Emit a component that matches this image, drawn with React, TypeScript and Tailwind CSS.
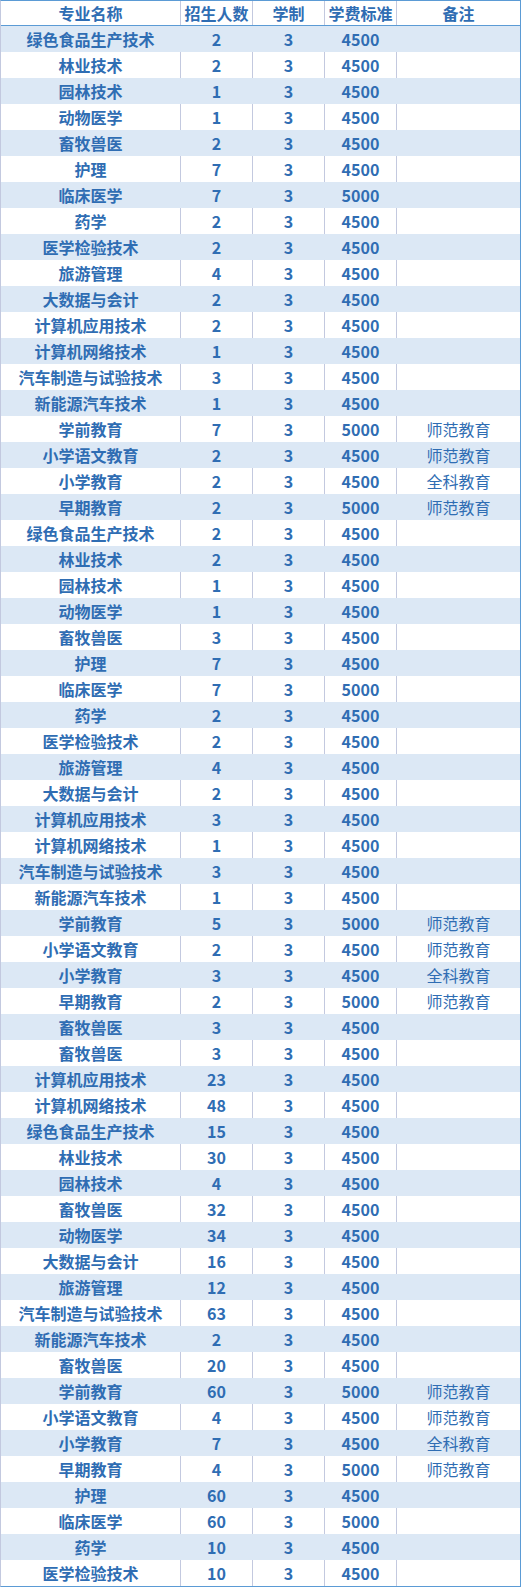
const rows: [string, string, string, string, string][] = [
  ["绿色食品生产技术", "2", "3", "4500", ""],
  ["林业技术", "2", "3", "4500", ""],
  ["园林技术", "1", "3", "4500", ""],
  ["动物医学", "1", "3", "4500", ""],
  ["畜牧兽医", "2", "3", "4500", ""],
  ["护理", "7", "3", "4500", ""],
  ["临床医学", "7", "3", "5000", ""],
  ["药学", "2", "3", "4500", ""],
  ["医学检验技术", "2", "3", "4500", ""],
  ["旅游管理", "4", "3", "4500", ""],
  ["大数据与会计", "2", "3", "4500", ""],
  ["计算机应用技术", "2", "3", "4500", ""],
  ["计算机网络技术", "1", "3", "4500", ""],
  ["汽车制造与试验技术", "3", "3", "4500", ""],
  ["新能源汽车技术", "1", "3", "4500", ""],
  ["学前教育", "7", "3", "5000", "师范教育"],
  ["小学语文教育", "2", "3", "4500", "师范教育"],
  ["小学教育", "2", "3", "4500", "全科教育"],
  ["早期教育", "2", "3", "5000", "师范教育"],
  ["绿色食品生产技术", "2", "3", "4500", ""],
  ["林业技术", "2", "3", "4500", ""],
  ["园林技术", "1", "3", "4500", ""],
  ["动物医学", "1", "3", "4500", ""],
  ["畜牧兽医", "3", "3", "4500", ""],
  ["护理", "7", "3", "4500", ""],
  ["临床医学", "7", "3", "5000", ""],
  ["药学", "2", "3", "4500", ""],
  ["医学检验技术", "2", "3", "4500", ""],
  ["旅游管理", "4", "3", "4500", ""],
  ["大数据与会计", "2", "3", "4500", ""],
  ["计算机应用技术", "3", "3", "4500", ""],
  ["计算机网络技术", "1", "3", "4500", ""],
  ["汽车制造与试验技术", "3", "3", "4500", ""],
  ["新能源汽车技术", "1", "3", "4500", ""],
  ["学前教育", "5", "3", "5000", "师范教育"],
  ["小学语文教育", "2", "3", "4500", "师范教育"],
  ["小学教育", "3", "3", "4500", "全科教育"],
  ["早期教育", "2", "3", "5000", "师范教育"],
  ["畜牧兽医", "3", "3", "4500", ""],
  ["畜牧兽医", "3", "3", "4500", ""],
  ["计算机应用技术", "23", "3", "4500", ""],
  ["计算机网络技术", "48", "3", "4500", ""],
  ["绿色食品生产技术", "15", "3", "4500", ""],
  ["林业技术", "30", "3", "4500", ""],
  ["园林技术", "4", "3", "4500", ""],
  ["畜牧兽医", "32", "3", "4500", ""],
  ["动物医学", "34", "3", "4500", ""],
  ["大数据与会计", "16", "3", "4500", ""],
  ["旅游管理", "12", "3", "4500", ""],
  ["汽车制造与试验技术", "63", "3", "4500", ""],
  ["新能源汽车技术", "2", "3", "4500", ""],
  ["畜牧兽医", "20", "3", "4500", ""],
  ["学前教育", "60", "3", "5000", "师范教育"],
  ["小学语文教育", "4", "3", "4500", "师范教育"],
  ["小学教育", "7", "3", "4500", "全科教育"],
  ["早期教育", "4", "3", "5000", "师范教育"],
  ["护理", "60", "3", "4500", ""],
  ["临床医学", "60", "3", "5000", ""],
  ["药学", "10", "3", "4500", ""],
  ["医学检验技术", "10", "3", "4500", ""],
];

const headers = ["专业名称", "招生人数", "学制", "学费标准", "备注"];

const font = { fontFamily: '"Noto Sans CJK SC", "Noto Sans", sans-serif' };

export default function App() {
  return (
    <div
      className="w-[521px] bg-white text-[16px] text-[#2f6db3] border-t border-r border-b border-t-[#5b9bd5] border-r-[#5b9bd5] border-b-[#5b9bd5] border-l border-l-[#c3c9df]"
      style={font}
    >
      {/* header */}
      <div className="grid grid-cols-[180px_72px_72px_72px_1fr] h-[25px] border-b border-[#5b9bd5] font-semibold">
        {headers.map((h, i) => (
          <div
            key={h}
            className={`flex items-center justify-center leading-none ${
              i < 4 ? "border-r border-[#c3c9df]" : ""
            }`}
          >
            {h}
          </div>
        ))}
      </div>

      {rows.map((r, idx) => {
        const blue = idx % 2 === 0;
        return (
          <div
            key={idx}
            className={`grid grid-cols-[180px_72px_72px_72px_1fr] h-[26px] ${
              blue ? "bg-[#dce8f5]" : "bg-white"
            }`}
          >
            {r.map((c, i) => (
              <div
                key={i}
                className={`flex items-center justify-center leading-none ${
                  i < 4
                    ? blue
                      ? "border-r border-[#dce8f5]"
                      : "border-r border-[#c3c9df]"
                    : ""
                } ${i === 4 ? "font-normal" : "font-semibold"}`}
              >
                {c}
              </div>
            ))}
          </div>
        );
      })}
    </div>
  );
}
